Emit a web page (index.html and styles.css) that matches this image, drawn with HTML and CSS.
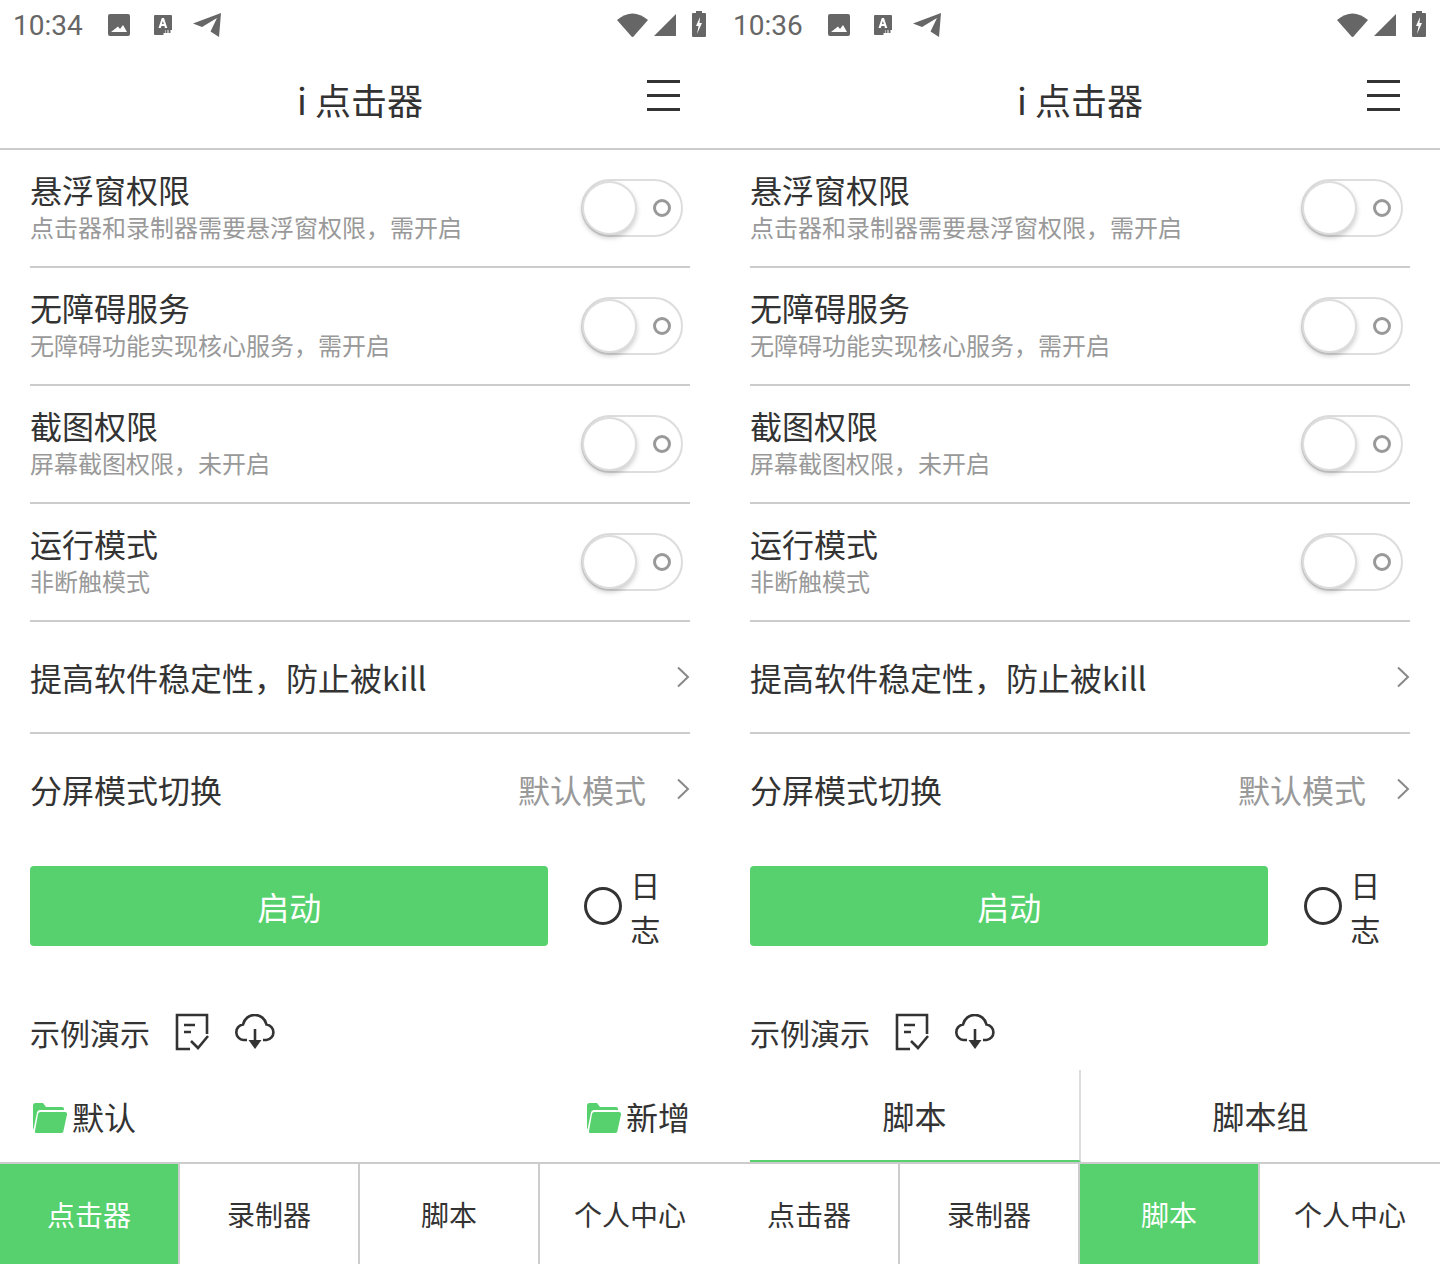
FILE: index.html
```html
<!DOCTYPE html>
<html lang="zh-CN">
<head>
  <meta charset="UTF-8" />
  <meta name="viewport" content="width=device-width, initial-scale=1.0" />
  <title>i 点击器</title>
  <link rel="stylesheet" href="styles.css">
</head>
<body>
  <!-- 图标 -->
  <svg class="sprite" xmlns="http://www.w3.org/2000/svg">
    <symbol id="i-photo" viewBox="0 0 22 22"><path fill-rule="evenodd" d="M2 0h18a2 2 0 0 1 2 2v18a2 2 0 0 1-2 2H2a2 2 0 0 1-2-2V2a2 2 0 0 1 2-2zM3 18h16l-4-7-3 4-2-2.500z"/></symbol>
    <symbol id="i-font" viewBox="0 0 18 20"><path fill-rule="evenodd" d="M1 0h16a1 1 0 0 1 1 1v14h-1.500v3h-2v-3h-1v3h-2v-3H11v3H9.500v2H1a1 1 0 0 1-1-1V1a1 1 0 0 1 1-1zM7.800 3 4.500 13h2.300l.6-2h3l.6 2h2.300L10 3zM8 9l.9-3.200L9.800 9z"/></symbol>
    <symbol id="i-send" viewBox="0 0 28 24"><path d="M28 0 26 24 17.500 18.500 24 5 9 14 0 10.500z"/><path d="M14 16.500 19 19.500 14 22z" opacity="0"/></symbol>
    <symbol id="i-wifi" viewBox="0 0 31 24"><path d="M0 7Q15.500-6 31 7L16.500 23.500a1.400 1.400 0 0 1-2 0z"/></symbol>
    <symbol id="i-signal" viewBox="0 0 22 22"><path d="M22 0v22H0z"/></symbol>
    <symbol id="i-battery" viewBox="0 0 14 26"><path fill-rule="evenodd" d="M4 0h6v2h3a1 1 0 0 1 1 1v22a1 1 0 0 1-1 1H1a1 1 0 0 1-1-1V3a1 1 0 0 1 1-1h3zM8 6 4 15h2.500L5 23l5-11H7.500z"/></symbol>
    <symbol id="i-chevron" viewBox="0 0 14 22"><path d="M2 1.500 12 11 2 20.500" fill="none" stroke="#888" stroke-width="2"/></symbol>
    <symbol id="i-note" viewBox="0 0 34 38"><path d="M15 36H2V2h30v19M9 12h11M9 19h7M16 28l7 7 10-12" fill="none" stroke="#333" stroke-width="2.600"/><path d="M23 35v-9" fill="none" stroke="#333" stroke-width="0"/></symbol>
    <symbol id="i-cloud" viewBox="0 0 42 36"><path d="M13 26H9.500a7.800 7.800 0 0 1-.5-15.500 12 12 0 0 1 23.500 0A7.800 7.800 0 0 1 32.500 26H29" fill="none" stroke="#333" stroke-width="2.600"/><path d="M21 15v14" stroke="#333" stroke-width="2.600"/><path d="M14.500 26h13L21 35z" fill="#333"/></symbol>
    <symbol id="i-folder" viewBox="0 0 34 30"><path d="M0 2.500A2.500 2.500 0 0 1 2.500 0H10l3 4h16a2 2 0 0 1 2 2v1H7a3 3 0 0 0-3 2.500L.5 26.500 0 25z"/><path d="M7 9h25a2 2 0 0 1 2 2.500l-3.500 16A2.500 2.500 0 0 1 28 30H3.500a1.500 1.500 0 0 1-1.500-2L5 11a2.500 2.500 0 0 1 2-2z"/></symbol>
  </svg>

  <div class="phones">
    <!-- 点击器页 -->
    <section class="phone">
      <div class="status-bar">
        <span class="clock">10:34</span>
        <svg class="ic-photo"><use href="#i-photo"/></svg>
        <svg class="ic-font"><use href="#i-font"/></svg>
        <svg class="ic-send"><use href="#i-send"/></svg>
        <span class="status-right">
          <svg class="ic-wifi"><use href="#i-wifi"/></svg>
          <svg class="ic-signal"><use href="#i-signal"/></svg>
          <svg class="ic-battery"><use href="#i-battery"/></svg>
        </span>
      </div>
      <header class="app-header">
        <h1 class="app-title">i 点击器</h1>
        <div class="menu-icon"><span></span><span></span><span></span></div>
      </header>
      <div class="settings">
        <div class="row row-toggle">
          <div><div class="row-title">悬浮窗权限</div><div class="row-sub">点击器和录制器需要悬浮窗权限，需开启</div></div>
          <div class="toggle"><span class="knob"></span><span class="off-dot"></span></div>
        </div>
        <div class="row row-toggle">
          <div><div class="row-title">无障碍服务</div><div class="row-sub">无障碍功能实现核心服务，需开启</div></div>
          <div class="toggle"><span class="knob"></span><span class="off-dot"></span></div>
        </div>
        <div class="row row-toggle">
          <div><div class="row-title">截图权限</div><div class="row-sub">屏幕截图权限，未开启</div></div>
          <div class="toggle"><span class="knob"></span><span class="off-dot"></span></div>
        </div>
        <div class="row row-toggle">
          <div><div class="row-title">运行模式</div><div class="row-sub">非断触模式</div></div>
          <div class="toggle"><span class="knob"></span><span class="off-dot"></span></div>
        </div>
        <div class="row row-link">
          <div class="row-title">提高软件稳定性，防止被kill</div>
          <svg class="ic-chevron"><use href="#i-chevron"/></svg>
        </div>
        <div class="row row-link row-last">
          <div class="row-title">分屏模式切换</div>
          <span class="row-value">默认模式</span>
          <svg class="ic-chevron"><use href="#i-chevron"/></svg>
        </div>
      </div>
      <div class="start-line">
        <button class="btn-start">启动</button>
        <span class="radio"></span>
        <span class="log-label">日志</span>
      </div>
      <div class="demo-line">
        <span class="demo-label">示例演示</span>
        <svg class="ic-note"><use href="#i-note"/></svg>
        <svg class="ic-cloud"><use href="#i-cloud"/></svg>
      </div>
      <div class="folder-line">
        <span class="folder"><svg class="ic-folder"><use href="#i-folder"/></svg>默认</span>
        <span class="folder"><svg class="ic-folder"><use href="#i-folder"/></svg>新增</span>
      </div>
      <nav class="tabbar">
        <div class="tab tab-on">点击器</div>
        <div class="tab">录制器</div>
        <div class="tab">脚本</div>
        <div class="tab">个人中心</div>
      </nav>
    </section>

    <!-- 脚本页 -->
    <section class="phone">
      <div class="status-bar">
        <span class="clock">10:36</span>
        <svg class="ic-photo"><use href="#i-photo"/></svg>
        <svg class="ic-font"><use href="#i-font"/></svg>
        <svg class="ic-send"><use href="#i-send"/></svg>
        <span class="status-right">
          <svg class="ic-wifi"><use href="#i-wifi"/></svg>
          <svg class="ic-signal"><use href="#i-signal"/></svg>
          <svg class="ic-battery"><use href="#i-battery"/></svg>
        </span>
      </div>
      <header class="app-header">
        <h1 class="app-title">i 点击器</h1>
        <div class="menu-icon"><span></span><span></span><span></span></div>
      </header>
      <div class="settings">
        <div class="row row-toggle">
          <div><div class="row-title">悬浮窗权限</div><div class="row-sub">点击器和录制器需要悬浮窗权限，需开启</div></div>
          <div class="toggle"><span class="knob"></span><span class="off-dot"></span></div>
        </div>
        <div class="row row-toggle">
          <div><div class="row-title">无障碍服务</div><div class="row-sub">无障碍功能实现核心服务，需开启</div></div>
          <div class="toggle"><span class="knob"></span><span class="off-dot"></span></div>
        </div>
        <div class="row row-toggle">
          <div><div class="row-title">截图权限</div><div class="row-sub">屏幕截图权限，未开启</div></div>
          <div class="toggle"><span class="knob"></span><span class="off-dot"></span></div>
        </div>
        <div class="row row-toggle">
          <div><div class="row-title">运行模式</div><div class="row-sub">非断触模式</div></div>
          <div class="toggle"><span class="knob"></span><span class="off-dot"></span></div>
        </div>
        <div class="row row-link">
          <div class="row-title">提高软件稳定性，防止被kill</div>
          <svg class="ic-chevron"><use href="#i-chevron"/></svg>
        </div>
        <div class="row row-link row-last">
          <div class="row-title">分屏模式切换</div>
          <span class="row-value">默认模式</span>
          <svg class="ic-chevron"><use href="#i-chevron"/></svg>
        </div>
      </div>
      <div class="start-line">
        <button class="btn-start">启动</button>
        <span class="radio"></span>
        <span class="log-label">日志</span>
      </div>
      <div class="demo-line">
        <span class="demo-label">示例演示</span>
        <svg class="ic-note"><use href="#i-note"/></svg>
        <svg class="ic-cloud"><use href="#i-cloud"/></svg>
      </div>
      <div class="script-tabs">
        <div class="script-tab script-tab-on">脚本</div>
        <div class="script-tab">脚本组</div>
      </div>
      <nav class="tabbar">
        <div class="tab">点击器</div>
        <div class="tab">录制器</div>
        <div class="tab tab-on">脚本</div>
        <div class="tab">个人中心</div>
      </nav>
    </section>
  </div>
</body>
</html>
```

FILE: styles.css
```css
html, body {
  margin: 0;
  padding: 0;
  height: 100%;
  overflow: hidden;
  background-color: #fff;
  font-family: "Noto Sans CJK SC", "Noto Sans", sans-serif;
  color: #333;
}

.sprite {
  display: none;
}

.phones {
  display: grid;
  grid-template-columns: 720px 720px;
  height: 1280px;
}

.phone {
  display: flex;
  flex-direction: column;
  height: 1280px;
  overflow: hidden;
}

/* status bar */
.status-bar {
  display: flex;
  align-items: center;
  height: 50px;
  padding: 0 14px 0 13px;
  fill: #666;
}

.clock {
  font-family: Roboto, sans-serif;
  font-size: 28px;
  color: #666;
  margin-right: 25px;
}

.ic-photo { width: 22px; height: 22px; margin-right: 24px; }
.ic-font { width: 18px; height: 20px; margin-right: 21px; }
.ic-send { width: 28px; height: 24px; }

.status-right {
  display: flex;
  align-items: center;
  margin-left: auto;
}

.ic-wifi { width: 31px; height: 24px; margin-right: 6px; }
.ic-signal { width: 22px; height: 22px; margin-right: 16px; }
.ic-battery { width: 14px; height: 26px; margin-bottom: 2px; }

/* header */
.app-header {
  position: relative;
  display: flex;
  align-items: center;
  justify-content: center;
  height: 98px;
  border-bottom: 2px solid #ccc;
}

.app-title {
  margin: 0;
  font-size: 36px;
  font-weight: 400;
}

.menu-icon {
  position: absolute;
  right: 40px;
  top: 30px;
  width: 33px;
  display: flex;
  flex-direction: column;
  gap: 11px;
}

.menu-icon span {
  height: 3px;
  background: #333;
}

/* settings list */
.settings {
  padding: 0 30px;
}

.row {
  display: flex;
  align-items: center;
  border-bottom: 2px solid #ccc;
}

.row-toggle {
  justify-content: space-between;
  height: 116px;
}

.row-link {
  height: 110px;
}

.row-last {
  border-bottom: none;
}

.row-title {
  font-size: 32px;
  line-height: 38px;
}

.row-sub {
  font-size: 24px;
  line-height: 38px;
  color: #999;
}

.row-value {
  margin-left: auto;
  font-size: 32px;
  color: #999;
}

.row-link .ic-chevron {
  margin-left: 30px;
}

.row-link .row-title + .ic-chevron {
  margin-left: auto;
}

.ic-chevron {
  width: 14px;
  height: 22px;
}

.toggle {
  position: relative;
  box-sizing: border-box;
  width: 102px;
  height: 58px;
  margin-right: 7px;
  border: 2px solid #ddd;
  border-radius: 29px;
}

.knob {
  position: absolute;
  left: -1px;
  top: 0;
  box-sizing: border-box;
  width: 55px;
  height: 54px;
  border: 2px solid #ddd;
  border-radius: 50%;
  background: #fff;
  box-shadow: 0 3px 5px rgba(0, 0, 0, 0.2);
}

.off-dot {
  position: absolute;
  right: 10px;
  top: 18px;
  box-sizing: border-box;
  width: 18px;
  height: 18px;
  border: 3px solid #999;
  border-radius: 50%;
}

/* start button */
.start-line {
  display: flex;
  align-items: center;
  margin-top: 18px;
  padding: 0 30px;
}

.btn-start {
  width: 520px;
  height: 80px;
  border: none;
  border-radius: 4px;
  background: #56d16e;
  color: #fff;
  font-family: inherit;
  font-size: 32px;
}

.radio {
  box-sizing: border-box;
  width: 38px;
  height: 38px;
  margin-left: 36px;
  border: 3px solid #333;
  border-radius: 50%;
}

.log-label {
  margin-left: 8px;
  font-size: 30px;
}

/* demo */
.demo-line {
  display: flex;
  align-items: center;
  height: 44px;
  margin-top: 60px;
  padding: 0 30px;
}

.demo-label {
  font-size: 30px;
}

.ic-note {
  width: 34px;
  height: 38px;
  margin-left: 25px;
}

.ic-cloud {
  width: 42px;
  height: 36px;
  margin-left: 25px;
}

/* folders */
.folder-line {
  display: flex;
  align-items: center;
  justify-content: space-between;
  height: 92px;
  margin-top: 16px;
  padding: 0 30px;
  font-size: 32px;
}

.folder {
  display: flex;
  align-items: center;
}

.ic-folder {
  width: 36px;
  height: 30px;
  margin: 4px 4px 0 2px;
  fill: #56d16e;
}

/* script tabs */
.script-tabs {
  display: flex;
  height: 92px;
  margin-top: 16px;
  padding-left: 30px;
}

.script-tab {
  display: flex;
  align-items: center;
  justify-content: center;
  flex: 1;
  font-size: 32px;
  padding-bottom: 2px;
}

.script-tab-on {
  flex: 0 0 329px;
  border-bottom: 2px solid #56d16e;
  padding-bottom: 0;
  height: 90px;
  border-right: 2px solid #ddd;
  box-sizing: content-box;
}

/* bottom tab bar */
.tabbar {
  display: grid;
  grid-template-columns: repeat(4, 180px);
  height: 100px;
  border-top: 2px solid #ccc;
}

.tab {
  display: flex;
  align-items: center;
  justify-content: center;
  box-sizing: border-box;
  border-right: 2px solid #ccc;
  font-size: 28px;
}

.tab:last-child {
  border-right: none;
}

.tab-on {
  background: #56d16e;
  color: #fff;
}
```
